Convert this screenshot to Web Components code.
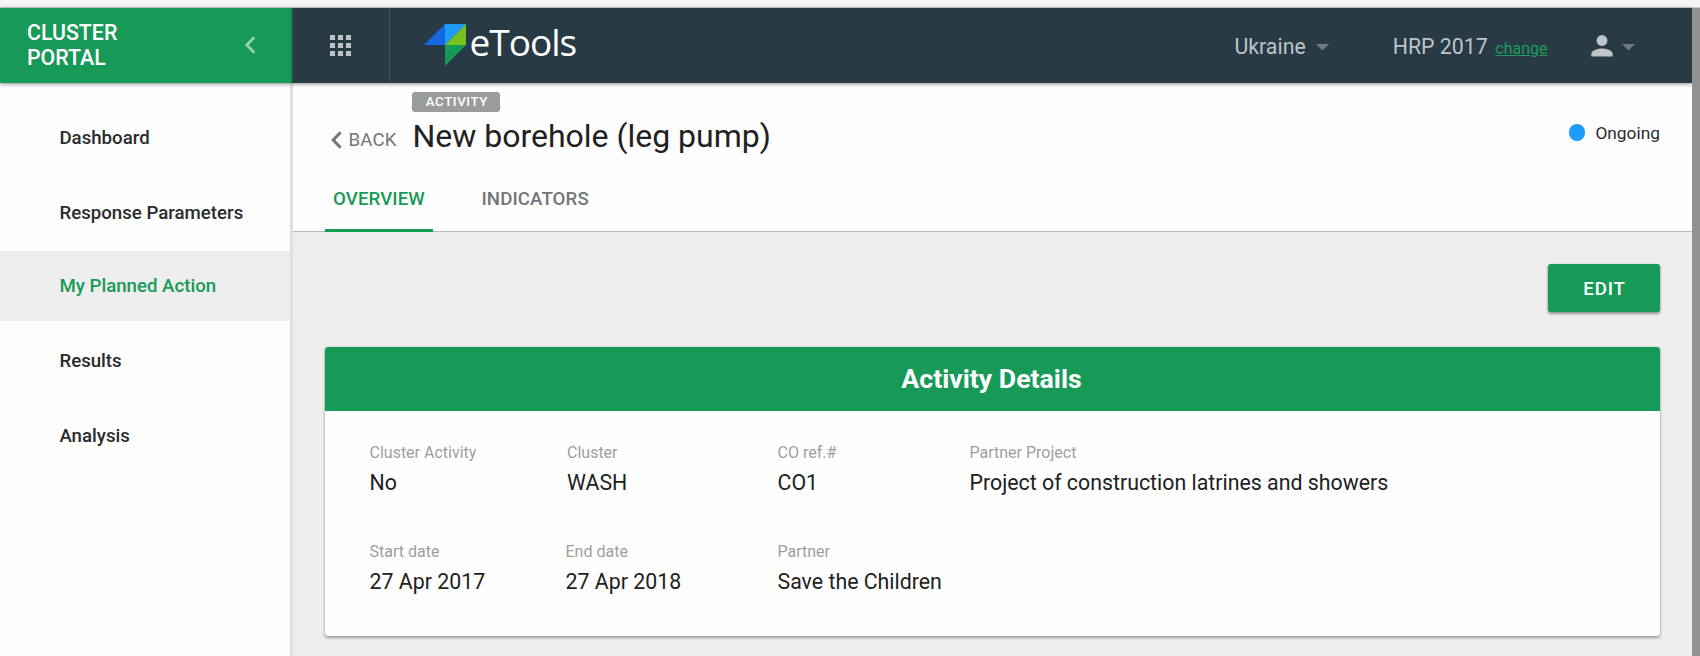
<!DOCTYPE html>
<html lang="en">
<head>
<meta charset="utf-8">
<title>eTools - Cluster Portal</title>
<style>
html,body{margin:0;height:100%;overflow:hidden}
body{font-family:Roboto,sans-serif;font-size:21.33px;color:#212121;background:#eee;--green:#179a58;--navy:#273a46}
</style>
</head>
<body>
<cluster-app></cluster-app>
<script>
function define(name, html) {
  const tpl = document.createElement('template');
  tpl.innerHTML = html;
  customElements.define(name, class extends HTMLElement {
    constructor() {
      super();
      this.attachShadow({mode: 'open'}).appendChild(tpl.content.cloneNode(true));
    }
  });
}

define('portal-brand', `<style>
:host{display:flex;align-items:center;justify-content:space-between;box-sizing:border-box;width:290px;height:75px;padding:0 34px 0 27px;background:var(--green);color:#fff;font-weight:500;font-size:21.33px;line-height:25px}
div{width:120px;margin-top:-1px}svg{display:block;margin-top:-1px}
</style><div><slot></slot></div>
<svg width="12" height="18" viewBox="0 0 12 18" fill="none" stroke="#fff" stroke-opacity=".55" stroke-width="2.8"><path d="M10.4 1.2 2.7 9l7.7 7.8"/></svg>`);

define('nav-item', `<style>
:host{display:flex;align-items:center;height:70px;box-sizing:border-box;padding-left:59.4px;font-size:18.67px;font-weight:500;color:#2b2b2b}
:host([active]){background:#eee;color:var(--green)}
</style><slot></slot>`);

define('side-nav', `<style>
:host{display:flex;flex-direction:column;gap:4.5px;box-sizing:border-box;width:293px;padding-top:19px;background:#fefefe;border-right:3px solid #e0e0e0;flex:none}
</style><slot></slot>`);

define('drop-caret', `<style>:host{display:block;width:13px;height:7px}svg{display:block}</style>
<svg width="13" height="7"><path d="M0 0h13L6.5 6.5z" fill="#6f7b83"/></svg>`);

define('brand-logo', `<style>
:host{display:flex;align-items:flex-start;height:75px}
svg{margin-top:16px;flex:none}
span{font:400 37px/50px "Open Sans",sans-serif;color:#fff;letter-spacing:-1px;margin:9px 0 0 2.5px}
</style>
<svg width="43" height="43" viewBox="0 0 43 43"><path d="M0 21 21 0v21z" fill="#1668e3"/><path d="M21 0h21L21 21z" fill="#1e9bfb"/><path d="M42 0v21H21z" fill="#76c220"/><path d="M21 21h21L21 42z" fill="#179a58"/></svg><span>eTools</span>`);

define('app-header', `<style>
:host{display:flex;height:75px;background:var(--navy);flex:1;color:#bec4c8}
.menu{box-sizing:border-box;width:97px;padding:27px 0 0 37px;border-right:1px solid #42535d}
svg{display:block}
brand-logo{margin-left:34px}
.right{display:flex;align-items:center;margin-left:auto;padding-right:57.5px;line-height:29px}
.right>span{margin-top:2px}
.right drop-caret{margin-top:3px}
a{color:#1c9c5a;font-size:16px;text-decoration:underline;margin-left:7.5px}
.right>.plan{margin:3px 43px 0 64px;white-space:nowrap}
</style>
<div class="menu"><svg width="22" height="22" viewBox="0 0 22 22" fill="#bec4c8"><path d="M0 0h5v5H0zM8 0h5v5H8zM16 0h5v5h-5zM0 8h5v5H0zM8 8h5v5H8zM16 8h5v5h-5zM0 16h5v5H0zM8 16h5v5H8zM16 16h5v5h-5z"/></svg></div>
<brand-logo></brand-logo>
<div class="right"><span>Ukraine</span><drop-caret style="margin-left:10px"></drop-caret>
<span class="plan">HRP 2017<a>change</a></span>
<svg width="22" height="22" viewBox="0 0 22 22" fill="#bec4c8"><circle cx="11" cy="5.5" r="5.4"/><path d="M.3 21.5v-2.7c0-3.6 7.1-5.4 10.7-5.4s10.7 1.8 10.7 5.4v2.7z"/></svg>
<drop-caret style="margin-left:9px"></drop-caret></div>`);

define('status-dot', `<style>
:host{display:flex;align-items:center;gap:10px;font-size:17.33px;line-height:20px;color:#2b2b2b}
i{width:16.5px;height:16.5px;border-radius:50%;background:#1e9bfb;margin-top:-1px}
</style><i></i><slot></slot>`);

define('tab-item', `<style>
:host{display:block;box-sizing:border-box;height:62px;padding:0 8.5px 0 8px;font-size:18.67px;letter-spacing:.1px;font-weight:500;line-height:59px;color:#757575}
:host([active]){color:var(--green);border-bottom:3px solid var(--green)}
</style><slot></slot>`);

define('page-header', `<style>
:host{display:block;box-sizing:border-box;height:149px;background:#fefefe;border-bottom:1px solid #b8baba;padding:9px 32px 0}
.top{display:flex;align-items:flex-start;height:78px}
.back{display:flex;align-items:center;gap:6.5px;width:81px;height:22px;padding-left:6px;margin-top:37px;font-size:18.67px;letter-spacing:.15px;line-height:22px;color:#757575;box-sizing:border-box}
svg{display:block}
.name{margin-left:6.4px}
.badge{display:block;width:88px;height:20px;border-radius:3px;background:#9b9b9b;color:#fff;font-size:13.33px;font-weight:500;letter-spacing:.55px;line-height:20.5px;text-align:center;text-indent:1px}
h1{margin:5px 0 0 0;font-size:32px;line-height:38px;font-weight:400}
status-dot{margin:31px 0 0 auto}
nav{display:flex;gap:40px}
</style>
<div class="top"><div class="back"><svg width="11" height="18" viewBox="0 0 11 18" fill="none" stroke="#757575" stroke-width="3"><path d="M9.6 1.3 2.2 9l7.4 7.7"/></svg>BACK</div>
<div class="name"><span class="badge">ACTIVITY</span><h1>New borehole (leg pump)</h1></div>
<status-dot>Ongoing</status-dot></div>
<nav><tab-item active>OVERVIEW</tab-item><tab-item>INDICATORS</tab-item></nav>`);

define('raised-button', `<style>
:host{display:block;width:112px;height:48px;border-radius:3px;background:var(--green);color:#fff;font-size:18.67px;font-weight:500;letter-spacing:.8px;line-height:50px;text-align:center;text-indent:1px;box-shadow:0 2px 3px rgba(0,0,0,.38),0 0 2px rgba(0,0,0,.12)}
</style><slot></slot>`);

define('data-field', `<style>
:host{display:block;flex:none;white-space:nowrap}
span{display:block;font-size:16px;line-height:20px;color:#9e9e9e}
b{display:block;font-weight:400;line-height:28px;margin-top:6px}
</style><span><slot name="label"></slot></span><b><slot></slot></b>`);

define('detail-card', `<style>
:host{display:block;height:289px;border-radius:3px;overflow:hidden;background:#fefefe;box-shadow:0 2px 3px rgba(0,0,0,.32),0 0 2px rgba(0,0,0,.2)}
h2{margin:0;height:64px;line-height:64px;padding-right:2px;background:var(--green);color:#fff;text-align:center;font-size:26.67px;font-weight:700}
.body{display:flex;flex-direction:column;gap:44.5px;padding:32px 44px 0 44.5px}
</style><h2><slot name="title"></slot></h2><div class="body"><slot></slot></div>`);

define('field-row', `<style>:host{display:grid;grid-template-columns:var(--cols)}</style><slot></slot>`);

define('cluster-app', `<style>
:host{display:flex;flex-direction:column;height:656px}
.chrome{height:7px;background:#f5f5f5;border-bottom:1px solid #cfcfcf}
.page{display:flex;flex:1;min-height:0}
.col{display:flex;flex-direction:column;flex:1;min-width:0}
.bar{display:flex;position:relative;z-index:1;box-shadow:0 1px 4px rgba(0,0,0,.45)}
.edge{width:3px;background:linear-gradient(90deg,#158a50 67%,#20534a 67%)}
.under{display:flex;flex:1;min-height:0}
main{flex:1;min-width:0}
.content{padding:32px 32px 0}
raised-button{margin:0 0 35px auto}
.scroll{width:8px;background:#929292;position:relative;z-index:2}
</style>
<div class="chrome"></div>
<div class="page"><div class="col">
<div class="bar"><portal-brand>CLUSTER PORTAL</portal-brand><div class="edge"></div><app-header></app-header></div>
<div class="under">
<side-nav><nav-item style="padding-top:2px">Dashboard</nav-item><nav-item style="padding-top:2px">Response Parameters</nav-item><nav-item active>My Planned Action</nav-item><nav-item>Results</nav-item><nav-item style="padding-top:1px">Analysis</nav-item></side-nav>
<main><page-header></page-header>
<div class="content"><raised-button>EDIT</raised-button>
<detail-card><span slot="title">Activity Details</span>
<field-row style="--cols:197.5px 210.5px 192px 1fr">
<data-field><span slot="label">Cluster Activity</span>No</data-field>
<data-field><span slot="label">Cluster</span>WASH</data-field>
<data-field><span slot="label">CO ref.#</span>CO1</data-field>
<data-field><span slot="label">Partner Project</span>Project of construction latrines and showers</data-field></field-row>
<field-row style="--cols:196px 212px 1fr">
<data-field><span slot="label">Start date</span>27 Apr 2017</data-field>
<data-field><span slot="label">End date</span>27 Apr 2018</data-field>
<data-field><span slot="label">Partner</span>Save the Children</data-field></field-row>
</detail-card></div></main></div>
</div><div class="scroll"></div></div>`);
</script>
</body>
</html>
